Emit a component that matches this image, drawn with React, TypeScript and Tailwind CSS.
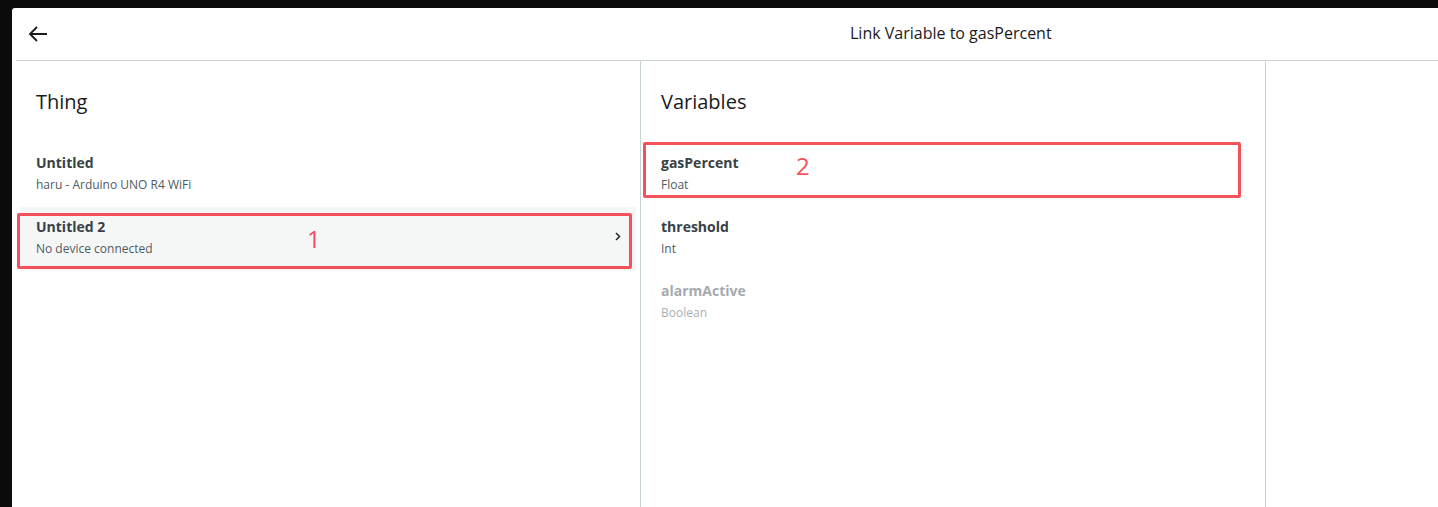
import type {FC} from 'react';

type Item = {name: string; sub: string; disabled?: boolean; active?: boolean};

const things: Item[] = [
    {name: 'Untitled', sub: 'haru - Arduino UNO R4 WiFi'},
    {name: 'Untitled 2', sub: 'No device connected', active: true},
];

const variables: Item[] = [
    {name: 'gasPercent', sub: 'Float'},
    {name: 'threshold', sub: 'Int'},
    {name: 'alarmActive', sub: 'Boolean', disabled: true},
];

const Row: FC<{item: Item; chevron?: boolean; inset: string}> = ({item, chevron, inset}) => (
    <div className={`${inset} mr-[4px] h-[64px] flex items-start pl-[16px] pr-[15px] pt-[10px] ${item.active ? 'bg-[#f5f7f7]' : ''}`}>
        <div className="flex-1">
            <div className={`text-[14px] leading-[20px] font-bold ${item.disabled ? 'text-[#a4abae]' : 'text-[#374146]'}`}>
                {item.name}
            </div>
            <div className={`mt-[4px] text-[12px] leading-[16px] ${item.disabled ? 'text-[#a9b0b3]' : 'text-[#4e5b61]'}`}>
                {item.sub}
            </div>
        </div>
        {chevron && (
            <svg width="6" height="9" viewBox="0 0 6 9" className="mt-[15px]">
                <path d="M1 1l3.5 3.5L1 8" fill="none" stroke="#1f2a2e" strokeWidth="1.5" />
            </svg>
        )}
    </div>
);

const App: FC = () => {
    return (
        <div className="relative h-[507px] w-[1438px] bg-[#0b0b0b] pt-[8px] pl-[12px] overflow-hidden" style={{fontFamily: '"Open Sans", "Noto Sans", sans-serif'}}>
            <div className="h-full bg-white rounded-tl-[3px] flex flex-col">
                <header className="ml-[4px] h-[53px] shrink-0 flex items-center border-b border-[#c9d2d2] pb-[2px]">
                    <button className="ml-[11px] mt-[2px] w-[22px] h-[22px] flex items-center justify-center">
                        <svg width="20" height="16" viewBox="0 0 20 16">
                            <path d="M19 8H2M9 1L2 8l7 7" fill="none" stroke="#1a1a1a" strokeWidth="1.8" />
                        </svg>
                    </button>
                    <h1 className="ml-[801px] text-[16px] text-[#1a1a1a] leading-[22px]">Link Variable to gasPercent</h1>
                </header>
                <div className="flex-1 flex">
                    <section className="w-[629px] border-r border-[#c9d2d2]">
                        <h2 className="pl-[24px] pt-[27px] text-[20px] leading-[28px] text-[#1a1a1a]">Thing</h2>
                        <div className="mt-[27px]">
                            {things.map((t) => (
                                <Row key={t.name} item={t} chevron={t.active} inset="ml-[8px]" />
                            ))}
                        </div>
                    </section>
                    <section className="w-[625px] border-r border-[#c9d2d2]">
                        <h2 className="pl-[20px] pt-[27px] text-[20px] leading-[28px] text-[#1a1a1a]">Variables</h2>
                        <div className="mt-[27px]">
                            {variables.map((v) => (
                                <Row key={v.name} item={v} inset="ml-[4px]" />
                            ))}
                        </div>
                    </section>
                    <section className="flex-1" />
                </div>
            </div>

            {/* annotation overlays */}
            <div className="absolute left-[17px] top-[213px] w-[615px] h-[56px] border-[3px] border-[#f4525a] rounded-[2px]" />
            <div className="absolute left-[307px] top-[224px] text-[24px] leading-[30px] text-[#f4466a]">1</div>
            <div className="absolute left-[643px] top-[142px] w-[598px] h-[56px] border-[3px] border-[#f4525a] rounded-[2px]" />
            <div className="absolute left-[796px] top-[151px] text-[24px] leading-[30px] text-[#f4525a]">2</div>
        </div>
    );
};

export default App;
